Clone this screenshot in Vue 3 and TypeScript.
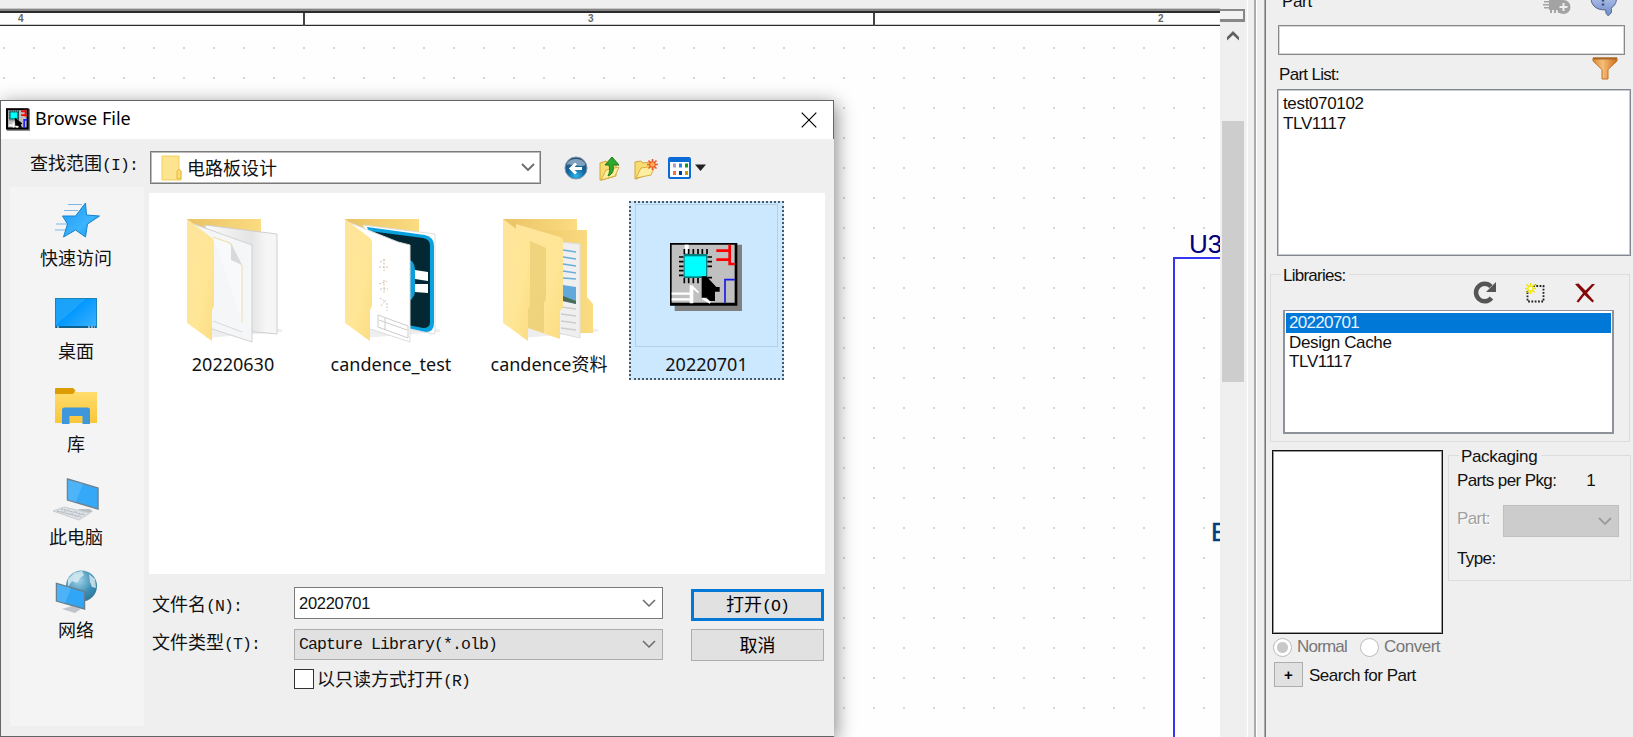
<script setup lang="ts">
import { ref } from 'vue'

interface Place { id: string; label: string }
interface FileEntry { id: string; label: string; selected?: boolean }

const places: Place[] = [
  { id: 'quick', label: '快速访问' },
  { id: 'desktop', label: '桌面' },
  { id: 'library', label: '库' },
  { id: 'pc', label: '此电脑' },
  { id: 'network', label: '网络' },
]
const files: FileEntry[] = [
  { id: 'docs', label: '20220630' },
  { id: 'app', label: 'candence_test' },
  { id: 'nested', label: 'candence资料' },
  { id: 'olb', label: '20220701', selected: true },
]
const parts = ['test070102', 'TLV1117']
const libraries = ['20220701', 'Design Cache', 'TLV1117']
const currentLibrary = ref('20220701')
</script>

<template>
  <div class="window">
    <div class="sheet">
      <div class="ruler">
        <span class="zone z4">4</span><span class="zone z3">3</span><span class="zone z2">2</span>
      </div>
      <div class="grid"></div>
      <div class="symbol"></div>
      <span class="ref-des">U3</span>
      <span class="pin">E</span>
    </div>

    <div class="vscroll">
      <div class="grip"></div>
      <svg class="arrow" width="12" height="10" viewBox="0 0 12 10"><path d="M0 9.500V6L6 0l6 6v3.500L6 4z" fill="#606060" /></svg>
      <div class="thumb"></div>
    </div>
    <div class="splitter"></div>

    <aside class="panel">
      <header class="panel-head">
        <span class="part-title">Part</span>
        <svg class="chip-add" width="28" height="16" viewBox="0 0 28 16">
          <path d="M6 0h14v10H6z M1 1h5v1.500H1z M0 4h6v1.500H0z M1 7h5v1.500H1z M7 10h2v3H7z M11 10h2v3h-2z M15 10h2v3h-2z" fill="#a3a3a3" />
          <circle cx="20.500" cy="7" r="7" fill="#a3a3a3" />
          <path d="M20.500 3v8M16.500 7h8" stroke="#f0f0f0" stroke-width="2" />
        </svg>
        <svg class="help" width="28" height="17" viewBox="0 0 28 17">
          <defs><linearGradient id="hb" x1="0" y1="0" x2="0" y2="1"><stop offset="0" stop-color="#b9c8ea" /><stop offset="1" stop-color="#6f8ccc" /></linearGradient></defs>
          <path d="M1 -6C0 5 5 10 16 10c-.5 3 0 4 2 5.500C22 14 22 10 21 8c4-2 5.500-6 5.500-10z" fill="url(#hb)" stroke="#52658f" />
          <path d="M13 0v1.500M13 3.500v2" stroke="#39477a" stroke-width="2.500" />
        </svg>
      </header>
      <div class="part-input"></div>
      <div class="list-head">
        <span>Part List:</span>
        <svg width="26" height="23" viewBox="0 0 26 23">
          <defs><linearGradient id="fn" x1="0" x2="1"><stop offset="0" stop-color="#d88a36" /><stop offset=".4" stop-color="#f8bd78" /><stop offset="1" stop-color="#cd6f16" /></linearGradient></defs>
          <path d="M1 1h24v3l-9 8.500V22h-6v-9.500L1 4z" fill="url(#fn)" stroke="#c07425" />
          <path d="M1 1.500h24" stroke="#a9662a" stroke-width="2" />
        </svg>
      </div>
      <ul class="parts"><li v-for="p in parts" :key="p">{{ p }}</li></ul>

      <section class="libs">
        <div class="legend">Libraries:</div>
        <div class="lib-tools">
          <svg width="24" height="23" viewBox="0 0 24 23">
            <path d="M18.500 17A8.700 8.700 0 1 1 18 5.500" fill="none" stroke="#555" stroke-width="4.500" />
            <path d="M23 1v10H13z" fill="#555" />
          </svg>
          <svg width="20" height="20" viewBox="0 0 20 20">
            <path d="M8 3h10.500v15.500h-16V9" fill="none" stroke="#222" stroke-width="1.800" stroke-dasharray="1.800 1.500" />
            <path d="M5.500 0v11M0 5.500h11M1.500 1.500l8 8M9.500 1.500l-8 8" stroke="#f2e600" stroke-width="1.700" />
            <path d="M10 1.500l2 1M1 9l2-1" stroke="#8b8300" /><circle cx="5.500" cy="5.500" r="1.800" fill="#fff" />
          </svg>
          <svg width="20" height="20" viewBox="0 0 20 20">
            <path d="M0 1l3.500-.5 7 7 6.500-6.500h3l-8 9 7 8-1.500 1.500-8-7.500L3.500 19.500l-2-1L8 10z" fill="#850808" />
          </svg>
        </div>
        <ul class="lib-list">
          <li v-for="l in libraries" :key="l" :class="{ on: l === currentLibrary }">{{ l }}</li>
        </ul>
      </section>

      <div class="detail">
        <div class="preview"></div>
        <section class="pack">
          <div class="legend">Packaging</div>
          <div class="row per"><span>Parts per Pkg:</span><span>1</span></div>
          <div class="row sel">
            <span>Part:</span>
            <div class="pcombo"><svg width="14" height="9" viewBox="0 0 14 9"><path d="M1 1l6 6 6-6" fill="none" stroke="#9c9c9c" stroke-width="1.800" /></svg></div>
          </div>
          <div class="row type">Type:</div>
        </section>
      </div>
      <div class="radios">
        <i class="radio checked"></i><span class="normal">Normal</span>
        <i class="radio"></i><span>Convert</span>
      </div>
      <div class="search"><button>+</button><span>Search for Part</span></div>
    </aside>

    <div class="dialog">
      <div class="titlebar">
        <svg class="app-icon" width="24" height="23" viewBox="0 0 70 66">
          <path d="M2 2h68v64H2z" fill="#777" /><path d="M0 0h66v62H0z" fill="#000" /><path d="M6 6h54v50H6z" fill="#c0c0c0" />
          <path d="M12 6v30M18 6v30M24 6v30M30 6v30M36 6v30M8 12h30M8 20h30M8 28h30" stroke="#222" stroke-width="2.500" />
          <path d="M12 11h22v20H12z" fill="#0ff" stroke="#008080" stroke-width="3" />
          <path d="M44 9h14M44 20h14M57 4v18h4" stroke="#f00" stroke-width="5" fill="none" />
          <path d="M53 58V34h9" stroke="#22f" stroke-width="5" fill="none" />
          <path d="M8 50h12M22 42v14M28 52l6 4" stroke="#fff" stroke-width="5" /><path d="M26 27l22 18-5 3 4 8-7 2-4-7-9 0z" fill="#000" />
        </svg>
        <span>Browse File</span>
        <svg class="close" width="16" height="16" viewBox="0 0 16 16"><path d="M.7.700l14.600 14.600M15.300.700L.700 15.300" stroke="#000" stroke-width="1.200" /></svg>
      </div>

      <div class="look-in">
        <span class="look-label">查找范围<b>(I):</b></span>
        <div class="path">
          <svg width="21" height="26" viewBox="0 0 21 26">
            <path d="M1 1h17v13l2 2v9H1z" fill="#ffe490" stroke="#f1cf5e" /><path d="M16 24v-8l2-2 2 2v8z" fill="#fbdc76" stroke="#e5b93a" />
          </svg>
          <span>电路板设计</span>
          <svg class="chev" width="14" height="9" viewBox="0 0 14 9"><path d="M1 1l6 6 6-6" fill="none" stroke="#6a6a6a" stroke-width="1.800" /></svg>
        </div>
        <svg class="t-back" width="24" height="24" viewBox="0 0 24 24">
          <defs><radialGradient id="bk" cx=".5" cy=".85" r=".8"><stop offset="0" stop-color="#2fb6ec" /><stop offset=".5" stop-color="#12669f" /><stop offset="1" stop-color="#2b4f78" /></radialGradient></defs>
          <circle cx="12" cy="12" r="11" fill="url(#bk)" stroke="#8095a8" />
          <path d="M2.500 9C4 1 20 1 21.500 9 16 12 8 7 2.500 9z" fill="#bfd0df" opacity=".6" />
          <path d="M18 12.500H8M12 7.500l-5 5 5 5" fill="none" stroke="#fff" stroke-width="3" />
        </svg>
        <svg class="t-up" width="22" height="25" viewBox="0 0 22 25">
          <path d="M1 7l6-2 2 2 8-1v14L3 24H1z" fill="#f6dc73" stroke="#d4a935" /><path d="M2 24l5-10 13-3-4 9z" fill="#fdeea2" stroke="#d9ae3c" />
          <path d="M9 20c5-2 6-6 5-11h6L13 1 6 9h4c1 4 1 7-1 11z" fill="#2fa82c" stroke="#1b7a1a" />
        </svg>
        <svg class="t-new" width="24" height="21" viewBox="0 0 24 21">
          <path d="M1 3l6-1 2 2 8-1v11L2 20H1z" fill="#f6dc73" stroke="#d4a935" /><path d="M2 19l5-10 14-2-4 9z" fill="#fdeea2" stroke="#d9ae3c" />
          <path d="M18.500 0v11M13 5.500h11M14.500 1.500l8 8M22.500 1.500l-8 8" stroke="#f0542b" stroke-width="1.500" /><circle cx="18.500" cy="5.500" r="2.800" fill="#ffb052" stroke="#ee4a22" />
        </svg>
        <svg class="t-view" width="23" height="22" viewBox="0 0 23 22">
          <rect x="1" y="1" width="21" height="20" rx="1" fill="#fff" stroke="#0b6bd6" stroke-width="2" /><path d="M1 2h21v3H1z" fill="#0b6bd6" />
          <path d="M5 6.500h3v4H5z" fill="#a9a0cf" /><path d="M11 6.500h3v4h-3z" fill="#1f86e8" /><path d="M17 6.500h3v4h-3z" fill="#0d9a1a" />
          <path d="M5 14h3v4H5z" fill="#f57240" /><path d="M11 14h3v4h-3z" fill="#0b3a9c" /><path d="M17 14h3v4h-3z" fill="#c59a11" />
        </svg>
        <svg class="t-caret" width="11" height="8" viewBox="0 0 11 8"><path d="M0 .5h11L5.500 7z" fill="#222" /></svg>
      </div>

      <div class="body">
        <nav class="places">
          <div v-for="p in places" :key="p.id" class="place">
            <svg v-if="p.id === 'quick'" width="48" height="44" viewBox="0 0 48 44">
              <defs><linearGradient id="st" x1="0" y1="0" x2="1" y2="1"><stop offset="0" stop-color="#1b98ee" /><stop offset=".6" stop-color="#3cb4ff" /><stop offset="1" stop-color="#1691e8" /></linearGradient></defs>
              <path d="M16 6.500h14M12 12.500h14M4 26h14M3 32h14" stroke="#77b9e8" stroke-width="1" />
              <path d="M33.500 5l1 12 13 1-12 8-2 13-10-7-12 7 4-13-5-8h13z" fill="url(#st)" stroke="#1583ce" />
            </svg>
            <svg v-else-if="p.id === 'desktop'" width="48" height="44" viewBox="0 0 48 44">
              <defs><linearGradient id="dk" x1="0" y1="0" x2="1" y2=".8"><stop offset="0" stop-color="#1aa1f9" /><stop offset=".45" stop-color="#1ba4fb" /><stop offset=".46" stop-color="#0298ff" /><stop offset="1" stop-color="#35aefe" /></linearGradient></defs>
              <rect x="3.500" y="7.500" width="41" height="29" fill="url(#dk)" stroke="#1a83ba" /><path d="M4 35h40v2H4z" fill="#11618e" /><path d="M5 36h2M36 36h2M39 36h2M42 36h1" stroke="#fff" />
            </svg>
            <svg v-else-if="p.id === 'library'" width="48" height="44" viewBox="0 0 48 44">
              <defs><linearGradient id="lb" x1="0" y1="0" x2="0" y2="1"><stop offset="0" stop-color="#ffdc6c" /><stop offset="1" stop-color="#fac63a" /></linearGradient></defs>
              <path d="M3 8h42v31H3z" fill="url(#lb)" /><path d="M3 5q0-1 1-1h17l2.500 2.500L21 10H3z" fill="#dd9b04" />
              <path d="M10 40V26q0-2.500 2.500-2.500h23Q38 23.500 38 26v14h-7.500v-8h-13v8z" fill="#3e97db" />
            </svg>
            <svg v-else-if="p.id === 'pc'" width="48" height="44" viewBox="0 0 48 44">
              <path d="M26 32l12 0 3 3-9 2z" fill="#b8bfc5" /><path d="M15.500 2l30.500 9v21L15.500 23z" fill="#35a9f8" stroke="#6d8394" stroke-width="1.500" /><path d="M16 3l15 4-7 18-8-2z" fill="#68c0fa" opacity=".5" />
              <path d="M1 34l11-4 26 6-11 7z" fill="#dde1e4" stroke="#c7cdd2" /><path d="M5 34l24 6M9 32l24 6" stroke="#a5adb4" stroke-dasharray="2 1" /><path d="M9 36l9-4M16 38l9-4M23 40l9-4" stroke="#c5cbd0" />
            </svg>
            <svg v-else width="48" height="44" viewBox="0 0 48 44">
              <defs><radialGradient id="gl" cx=".4" cy=".3" r=".8"><stop offset="0" stop-color="#a5d5e9" /><stop offset=".6" stop-color="#3a8db5" /><stop offset="1" stop-color="#2f7294" /></radialGradient></defs>
              <circle cx="29.500" cy="16" r="15.500" fill="url(#gl)" /><path d="M16 9l6-6 8-2 2 4-4 3-3 5-5-2-4 6zM37 4l6 5 1 9-4-1-2-5z" fill="#dcedf3" opacity=".8" />
              <path d="M10 39l10-3 9 3-6 4z" fill="#bfc5ca" /><path d="M4.500 13.500l28 8V39l-28-8z" fill="#31a6f7" stroke="#67808f" stroke-width="1.500" /><path d="M5 14l14 4-6 15-8-2z" fill="#68c0fa" opacity=".5" />
            </svg>
            <span>{{ p.label }}</span>
          </div>
        </nav>

        <div class="files">
          <div v-for="f in files" :key="f.id" class="file" :class="{ selected: f.selected }">
            <div class="thumb-box">
              <svg v-if="f.id !== 'olb'" width="108" height="128" viewBox="0 0 108 128">
                <defs>
                  <linearGradient id="fb" x1="0" x2="1"><stop offset="0" stop-color="#e9c364" /><stop offset="1" stop-color="#fbdc82" /></linearGradient>
                  <linearGradient id="ff" x1="0" y1="0" x2="1" y2="1"><stop offset="0" stop-color="#ffe49b" /><stop offset=".6" stop-color="#ffe696" /><stop offset="1" stop-color="#fbdc82" /></linearGradient>
                  <linearGradient id="pg" x1="0" x2="1"><stop offset="0" stop-color="#fbfbfb" /><stop offset=".3" stop-color="#f0f0f0" /><stop offset=".64" stop-color="#e4e4e4" /><stop offset=".85" stop-color="#f6f6f6" /></linearGradient>
                </defs>
                <path d="M20 122l76-6q6-3-10-4l-60-2z" fill="#ddd" opacity=".5" />
                <path d="M2 3h74v100H2z" fill="url(#fb)" />
                <template v-if="f.id === 'docs'">
                  <path d="M20 9l72 9v100L30 112z" fill="url(#pg)" stroke="#cfcfcf" /><path d="M6 7l61 22v97L12 108z" fill="#f5f6f7" stroke="#d2d2d2" />
                  <path d="M28 21l17 6 12 23v56" fill="#f8f9fa" stroke="#f0dba5" /><path d="M46 27v17l11 5z" fill="#d9d9d9" /><path d="M28 105l29 11" stroke="#d9d9d9" />
                </template>
                <template v-else-if="f.id === 'app'">
                  <path d="M20 9l72 9v100L60 112z" fill="#fff" stroke="#ddd" />
                  <path d="M24 11l58 8q9 2 9 11v77q0 9-8 9L60 111z" fill="#0aa1df" /><path d="M26 15l54 7q7 1 7 8v76q0 6-7 6l-20-4z" fill="#032833" />
                  <path d="M60 39q12 6 12 14v22q0 9-12 13z" fill="#0c9fd8" /><path d="M72 54l13 2v9l-13-2zM72 68h13v9l-13-1z" fill="#fff" />
                  <path d="M5 6l50 20 12 3v97L12 108z" fill="#fff" stroke="#ddd" />
                  <path d="M37 46l6-3M41 43v12M36 51h10M36 68l8-3M41 64v13M37 73h8M37 82l6 4M38 90l5-6M44 87v8" stroke="#d5c0ae" stroke-dasharray="2 1.500" />
                  <path d="M35 99l30 11v12L35 111z M36 104l28 10M42 102v12" fill="none" stroke="#ccc" />
                </template>
                <template v-else>
                  <path d="M15 14h71v67l6 7v29H60z" fill="url(#fb)" /><path d="M60 26l19 2v94l-22-5z" fill="#efefef" stroke="#ddd" />
                  <path d="M62 34l13 2M62 41l13 2M62 48l13 2M62 55l13 2M62 62l13 1" stroke="#6aafda" stroke-width="1.500" /><path d="M62 69l13 2v17l-13-3z" fill="#62a9db" /><path d="M62 80l13 5v3l-13-3z" fill="#4c6c52" />
                  <path d="M60 91l15 2M60 98l15 2M60 105l15 2M60 112l15 2" stroke="#ccc" stroke-width="1.500" />
                  <path d="M15 8l44 13q3 1 3 4v66l-3 4v28L15 108z" fill="url(#ff)" /><path d="M27 24l18 8v51l-2 4v30L15 108z" fill="#ecd078" opacity=".85" />
                </template>
                <path d="M2 3l25 19q2 2 2 5v63l-2 4v31L2 107z" fill="url(#ff)" />
              </svg>
              <svg v-else class="olb" width="72" height="68" viewBox="0 0 216 204">
                <path d="M14 5h202v199H14z" fill="#808080" /><path d="M0 0h202v188H0z" fill="#000" /><path d="M5 5h189v174H5z" fill="#c0c0c0" />
                <path d="M44 5h12v25H44z" fill="#fff" /><path d="M43 18v15M56 18v15M70 18v15M84 18v15M97 18v15M111 18v15M43 105v16M56 105v16M70 105v16M84 105v16M27 42h14M27 56h14M27 70h14M27 83h14M27 97h14M112 42h14M112 56h14M112 70h14M112 104h14" stroke="#000" stroke-width="5" />
                <path d="M41 33h71v72H41z" fill="#008080" /><path d="M44 40h64v60H44z" fill="#0ff" />
                <path d="M139 23h40M139 50h40M179 5v58h15" stroke="#f00" stroke-width="8" fill="none" /><path d="M165 179V110h29" fill="none" stroke="#1818e8" stroke-width="5" />
                <path d="M5 152h56M5 169h56" stroke="#fff" stroke-width="7" /><path d="M59 127h8l20 20-3 4-14-12v42H59z" fill="#fff" /><path d="M97 165l24 14" stroke="#fff" stroke-width="7" />
                <path d="M95 100h14l30 32h10v14h-14v28h-15l-10-10H95z" fill="#000" />
              </svg>
            </div>
            <span>{{ f.label }}</span>
          </div>
        </div>
      </div>

      <div class="form">
        <div class="labels"><span>文件名<b>(N):</b></span><span>文件类型<b>(T):</b></span></div>
        <div class="inputs">
          <div class="combo name"><span>20220701</span><svg width="14" height="9" viewBox="0 0 14 9"><path d="M1 1l6 6 6-6" fill="none" stroke="#6a6a6a" stroke-width="1.500" /></svg></div>
          <div class="combo kind"><span>Capture Library(*.olb)</span><svg width="14" height="9" viewBox="0 0 14 9"><path d="M1 1l6 6 6-6" fill="none" stroke="#6a6a6a" stroke-width="1.500" /></svg></div>
          <div class="readonly"><i></i><span>以只读方式打开<b>(R)</b></span></div>
        </div>
        <div class="actions">
          <button class="open">打开<b>(O)</b></button>
          <button class="cancel">取消</button>
        </div>
      </div>
    </div>
  </div>
</template>

<style>
body { margin: 0; overflow: hidden; }
</style>

<style scoped>
* { box-sizing: border-box; }
svg { display: block; flex: none; overflow: visible; }
ul { list-style: none; margin: 0; padding: 0; }
.window { position: relative; display: flex; width: 1633px; height: 737px; overflow: hidden; background: #efefef; color: #111; font: 17px/20px "Liberation Sans", Arial, sans-serif; }

.sheet { position: relative; width: 1220px; height: 737px; padding-top: 8px; overflow: hidden; background: #efefef; flex: none; }
.ruler { position: relative; height: 18px; border-top: 1px solid #c8c8c8; background: linear-gradient(#858585 0 2px, #2b2b2b 2px 4px, #fefefe 4px 15px, #ccc 15px 16px, #2b2b2b 16px 17px, #999 17px); }
.ruler::before, .ruler::after { content: ""; position: absolute; top: 4px; width: 2px; height: 13px; background: #444; left: 303px; }
.ruler::after { left: 873px; }
.zone { position: absolute; top: 4px; font: bold 10px/11px "Liberation Sans", sans-serif; color: #666; }
.z4 { left: 18px; } .z3 { left: 588px; } .z2 { left: 1158px; }
.grid { height: 711px; background-color: #fefefe; background-image: radial-gradient(circle at 15px 15px, #d6d6d6 0 .8px, transparent 1.300px); background-size: 30px 30px; background-position: 19px 7px; }
.symbol { position: absolute; left: 1173px; top: 257px; width: 80px; height: 500px; border: 2px solid #3535f5; border-right: 0; }
.ref-des { position: absolute; left: 1189px; top: 229px; font-size: 26px; line-height: 30px; color: #000080; }
.pin { position: absolute; left: 1211px; top: 517px; font-size: 26px; line-height: 30px; color: #004080; -webkit-text-stroke: .5px #004080; }

.vscroll { width: 25px; padding-left: 1px; background: #efefef; flex: none; }
.grip { width: 26px; height: 13px; margin: 9px 0 0 -1px; border: 1px solid #ccc; border-width: 2px 3px 3px 0; border-color: #888 #888 #888 #fff; background: #f3f3f3; }
.arrow { margin: 9px 0 0 6px; }
.thumb { width: 22px; height: 261px; margin: 80px 0 0 1px; background: #cdcdcd; }
.splitter { width: 22px; flex: none; background: linear-gradient(90deg, #f0f0f0 2px, #fff 2px 3px, #efefef 3px 9px, #aaa 9px 11px, #fff 11px 12px, #efefef 12px 19px, #aaa 19px 20px, #777 20px 21px, #efefef 21px); }

.panel { width: 366px; overflow: hidden; letter-spacing: -.35px; flex: none; }
.panel-head { display: flex; height: 25px; }
.part-title { width: 276px; padding-left: 15px; margin-top: -8px; flex: none; }
.help { margin-left: 19px; }
.part-input { width: 347px; height: 30px; margin-left: 11px; border: 1px solid #888; outline: 1px solid #d8d8d8; outline-offset: -2px; background: #fff; }
.list-head { display: flex; justify-content: space-between; height: 34px; padding: 2px 15px 0 12px; }
.list-head span { margin-top: 8px; letter-spacing: -.7px; }
.parts { width: 354px; height: 167px; margin-left: 10px; padding: 4px 5px; border: 1px solid #828790; background: #fff; outline: 1px solid #c8cacf; outline-offset: -2px; }
.parts li { height: 19.500px; line-height: 20px; }
.parts li:first-child { letter-spacing: -.35px; }
.lib-list li.on { letter-spacing: -.7px; }
.libs { width: 360px; height: 168px; margin: 18px 0 0 3px; padding-left: 10px; border: 1px solid #dcdcdc; }
.legend { width: max-content; margin: -10px 0 0 0; padding: 0 4px 0 2px; background: #efefef; line-height: 21px; letter-spacing: -.75px; }
.lib-tools { display: flex; align-items: center; height: 25px; margin-top: -6px; padding-left: 192px; gap: 28px; }
.lib-tools svg:nth-child(3) { margin-left: 2px; }
.lib-list { width: 331px; height: 124px; margin-top: 5px; margin-left: 2px; padding: 1px; border: 2px solid #8d929b; border-width: 1px 2px 2px; background: #fff; }
.lib-list li { height: 19.500px; padding-left: 3px; line-height: 20px; }
.lib-list li.on { color: #e8f3ff; background: #0078d7; margin-top: 1px; }
.detail { display: flex; margin: 8px 0 0 5px; }
.preview { width: 171px; height: 184px; border: 1px solid #111; outline: 1px solid #999; outline-offset: -2px; background: #fff; flex: none; }
.pack { width: 183px; height: 126px; margin: 5px 0 0 5px; padding-left: 8px; border: 1px solid #dcdcdc; }
.pack .legend { margin-left: 2px; letter-spacing: -.35px; }
.row { display: flex; letter-spacing: -.6px; }
.per { margin-top: 4px; gap: 30px; }
.sel { height: 32px; margin-top: 14px; color: #a0a0a0; text-shadow: 1px 1px #fff; }
.sel span { width: 46px; margin-top: 4px; }
.pcombo { display: flex; align-items: center; justify-content: flex-end; width: 116px; height: 32px; padding-right: 6px; border: 1px solid #bfbfbf; background: #ccc; }
.type { margin-top: 12px; }
.radios { display: flex; align-items: center; height: 20px; margin: 3px 0 0 6px; color: #777; }
.radio { display: block; width: 19px; height: 19px; border: 1px solid #bcbcbc; border-radius: 50%; background: #fff; }
.radio.checked { background: radial-gradient(circle, #c8c8c8 0 5px, #fff 6px); }
.radio + span { margin-left: 5px; letter-spacing: -.5px; }
.radio + .normal { width: 63px; letter-spacing: -.8px; }
.search { display: flex; margin: 5px 0 0 7px; }
.search button { width: 29px; height: 25px; padding: 0; border: 1px solid #adadad; background: #e1e1e1; font: bold 15px/20px "Liberation Sans", sans-serif; }
.search span { margin: 4px 0 0 6px; letter-spacing: -.5px; }

.dialog { position: absolute; left: 0; top: 100px; width: 834px; height: 637px; border: 1px solid #666; border-right: 0; background: #efefef; box-shadow: 2px 4px 18px rgba(0,0,0,.48); font: 18px/24px "Noto Sans", "Noto Sans CJK SC", sans-serif; }
b { font: 16.500px/20px "Liberation Mono", monospace; letter-spacing: -.9px; }
.titlebar { display: flex; height: 38px; padding: 7px 0 0 5px; background: #fff; border-right: 1px solid #666; color: #000; }
.titlebar span { margin: -2px 0 0 5px; }
.close { margin: 4px 16px 0 auto; }
.look-in { display: flex; height: 54px; padding-top: 12px; }
.look-label { width: 120px; margin: 0 0 0 29px; white-space: nowrap; }
.path { display: flex; align-items: center; width: 391px; height: 33px; padding: 0 5px 0 10px; border: 1px solid #7a7a7a; outline: 1px solid #bbb; outline-offset: -2px; background: #fff; }
.path span { margin-left: 5px; }
.chev { margin-left: auto; }
.t-back { margin: 5px 0 0 23px; }
.t-up { margin: 5px 0 0 11px; }
.t-new { margin: 8px 0 0 13px; }
.t-view { margin: 6px 0 0 10px; }
.t-caret { margin: 13px 0 0 4px; }
.body { display: flex; height: 381px; }
.places { width: 134px; height: 539px; margin: -6px 0 0 9px; padding-top: 11px; background: #f4f4f4; flex: none; }
.place { display: flex; flex-direction: column; align-items: center; height: 93px; }
.place svg { margin-left: -3px; }
.place span { margin-top: 4px; margin-left: -2px; }
.files { display: flex; gap: 2px; width: 676px; height: 381px; margin-left: 5px; padding: 8px 0 0 6px; background: #fff; }
.file { width: 156px; height: 179px; padding: 3px 6px 0; text-align: center; }
.thumb-box { display: flex; justify-content: center; width: 143px; height: 143px; padding: 12px 0 0 13px; }
.file > span { display: block; margin-top: 5px; white-space: nowrap; }
.selected { width: 155px; background: #cce8ff; outline: 2px dotted #4b5964; outline-offset: -2px; }
.selected .thumb-box { border: 1px solid #b5d0e5; padding: 38px 2px 0 0; }
.form { display: flex; height: 161px; padding-left: 151px; }
.labels { display: flex; flex-direction: column; width: 142px; padding-top: 18px; }
.labels span { height: 38px; }
.inputs { width: 369px; padding-top: 13px; }
.combo { display: flex; align-items: center; justify-content: space-between; height: 32px; padding: 0 6px 0 4px; border: 1px solid #7a7a7a; background: #fff; }
.combo.name span { font: 16.500px/20px "Liberation Sans", sans-serif; letter-spacing: -.3px; }
.combo.kind { height: 31px; margin-top: 10px; border-color: #adadad; background: #e1e1e1; font: 16.500px/20px "Liberation Mono", monospace; letter-spacing: -.9px; }
.readonly { display: flex; align-items: center; height: 22px; margin-top: 8px; }
.readonly i { width: 20px; height: 20px; border: 1px solid #333; background: #fff; }
.readonly span { margin-left: 3px; }
.actions { width: 133px; margin: 15px 0 0 28px; }
.actions button { display: block; width: 133px; height: 32px; padding: 0; border: 1px solid #adadad; background: #e1e1e1; color: #000; font: 18px/20px "Noto Sans CJK SC", sans-serif; }
.actions .open { border: 3px solid #0078d7; }
.actions .cancel { margin-top: 8px; padding-bottom: 3px; }
</style>
